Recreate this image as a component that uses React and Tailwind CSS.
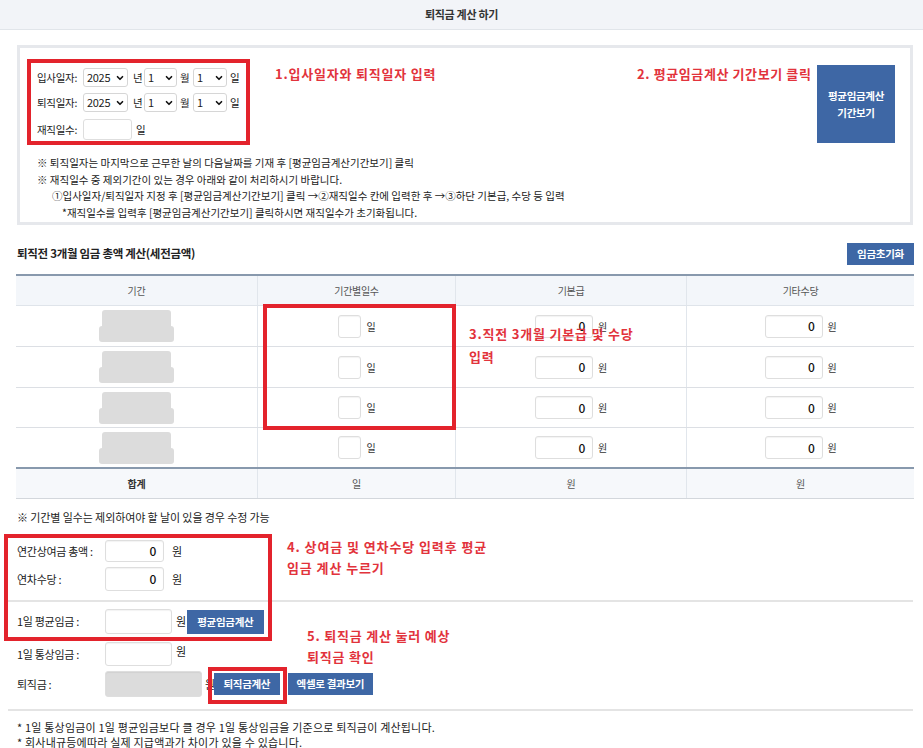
import React from 'react'
import { ChevronDown } from 'lucide-react'

// small pieces
const Select = ({ value, w }) => (
  <div className={`${w} h-[19px] border border-[#d6d6d6] rounded-[3px] bg-white flex items-center justify-between pl-[3px] pr-[2px] text-[11px] text-[#222]`}>
    <span>{value}</span>
    <ChevronDown size={10} strokeWidth={4} className="text-[#111]" />
  </div>
)

const Field = ({ w, h = 'h-[23px]', value, gray }) => (
  <div className={`${w} ${h} border border-[#dedede] rounded-[3px] shadow-[inset_0_1px_1px_rgba(0,0,0,0.05)] flex items-center justify-end pr-[7px] text-[12px] font-medium text-[#111] ${gray ? 'bg-[#dcdcdc] border-[#dcdcdc]' : 'bg-white'}`}>
    {value}
  </div>
)

const BlueBtn = ({ children, className = '' }) => (
  <div className={`bg-[#3e67a5] text-white font-bold text-[10.5px] tracking-[-0.3px] flex items-center justify-center ${className}`}>
    {children}
  </div>
)

const Blur = () => (
  <div className="flex flex-col items-center">
    <div className="w-[69px] h-[16px] bg-[#dcdcdc] rounded-t-[3px]" />
    <div className="w-[75px] h-[16px] bg-[#dcdcdc] rounded-[3px]" />
  </div>
)

const rows = [41, 41, 40, 40]

const App = () => {
  return (
    <div className="relative w-[923px] h-[748px] overflow-hidden bg-white text-[#333] font-['Noto_Sans_CJK_KR','Noto_Sans',sans-serif]">
      {/* header */}
      <div className="h-[30px] bg-[#f2f4f8] border-b border-[#e1e5ea] flex items-center justify-center text-[11px] font-bold tracking-[-0.3px] text-[#333]">
        퇴직금 계산 하기
      </div>

      {/* date box */}
      <div className="ml-[17px] mt-[15px] w-[896px] h-[180px] border-[3px] border-[#e6e8ec] flex flex-col">
        <div className="flex justify-between items-start">
          <div className="ml-[7px] mt-[11px] w-[223px] h-[86px] border-[4px] border-[#e3232c] pl-[6px] pt-[5px] flex flex-col text-[10.5px] tracking-[-0.3px] text-[#222]">
            <div className="flex items-center h-[19px]">
              <span className="w-[46px]">입사일자:</span>
              <Select value="2025" w="w-[45px]" />
              <span className="ml-[5px] w-[11px]">년</span>
              <Select value="1" w="w-[33px]" />
              <span className="ml-[3px] w-[13px]">월</span>
              <Select value="1" w="w-[34px]" />
              <span className="ml-[3px]">일</span>
            </div>
            <div className="flex items-center h-[19px] mt-[6px]">
              <span className="w-[46px]">퇴직일자:</span>
              <Select value="2025" w="w-[45px]" />
              <span className="ml-[5px] w-[11px]">년</span>
              <Select value="1" w="w-[33px]" />
              <span className="ml-[3px] w-[13px]">월</span>
              <Select value="1" w="w-[34px]" />
              <span className="ml-[3px]">일</span>
            </div>
            <div className="flex items-center h-[21px] mt-[7px]">
              <span className="w-[46px]">재직일수:</span>
              <div className="w-[49px] h-[21px] border border-[#dedede] rounded-[3px] bg-white" />
              <span className="ml-[4px]">일</span>
            </div>
          </div>
          <BlueBtn className="mt-[17px] mr-[15px] w-[78px] h-[78px] flex-col leading-[17px]">
            <span>평균임금계산</span>
            <span>기간보기</span>
          </BlueBtn>
        </div>
        <div className="mt-[10px] text-[10.5px] tracking-[0px] leading-[16.5px] text-[#222]">
          <p className="pl-[17px]">※ 퇴직일자는 마지막으로 근무한 날의 다음날짜를 기재 후 [평균임금계산기간보기] 클릭</p>
          <p className="pl-[17px]">※ 재직일수 중 제외기간이 있는 경우 아래와 같이 처리하시기 바랍니다.</p>
          <p className="pl-[32px]">①입사일자/퇴직일자 지정 후 [평균임금계산기간보기] 클릭 →②재직일수 칸에 입력한 후 →③하단 기본급, 수당 등 입력</p>
          <p className="pl-[42px]">*재직일수를 입력후 [평균임금계산기간보기] 클릭하시면 재직일수가 초기화됩니다.</p>
        </div>
      </div>

      {/* section title */}
      <div className="ml-[17px] mt-[18px] w-[897px] h-[22px] flex items-center justify-between">
        <span className="text-[11.5px] font-bold tracking-[-0.3px] text-[#222]">퇴직전 3개월 임금 총액 계산(세전금액)</span>
        <BlueBtn className="w-[67px] h-[22px]">임금초기화</BlueBtn>
      </div>

      {/* table */}
      <div className="ml-[16px] mt-[9px] w-[898px] text-[10px] tracking-[-0.3px] text-[#555]">
        <div className="grid grid-cols-[242px_198px_231px_227px] h-[32px] bg-[#f3f6fa] border-t-2 border-b border-t-[#8899ad] border-b-[#dfe4ea]">
          <div className="flex items-center justify-center border-r border-[#e1e6ec]">기간</div>
          <div className="flex items-center justify-center border-r border-[#e1e6ec]">기간별일수</div>
          <div className="flex items-center justify-center border-r border-[#e1e6ec]">기본급</div>
          <div className="flex items-center justify-center">기타수당</div>
        </div>
        {rows.map((h, i) => (
          <div
            key={i}
            className={`grid grid-cols-[242px_198px_231px_227px] border-b border-[#dcdfe4] ${h === 41 ? 'h-[41px]' : 'h-[40px]'}`}
          >
            <div className="flex items-center justify-center border-r border-[#e1e6ec]"><Blur /></div>
            <div className="flex items-center justify-center gap-[6px] border-r border-[#e1e6ec]">
              <Field w="w-[23px]" />
              <span className="text-[#333]">일</span>
            </div>
            <div className="flex items-center justify-center gap-[5px] border-r border-[#e1e6ec]">
              <Field w="w-[58px]" value="0" />
              <span className="text-[#333]">원</span>
            </div>
            <div className="flex items-center justify-center gap-[5px]">
              <Field w="w-[58px]" value="0" />
              <span className="text-[#333]">원</span>
            </div>
          </div>
        ))}
        <div className="grid grid-cols-[242px_198px_231px_227px] h-[32px] bg-[#f6f8fb] border-t-2 border-b border-t-[#8899ad] border-b-[#d3d7dc] -mt-px">
          <div className="flex items-center justify-center border-r border-[#e1e6ec] font-bold text-[#333]">합계</div>
          <div className="flex items-center justify-center border-r border-[#e1e6ec]">일</div>
          <div className="flex items-center justify-center border-r border-[#e1e6ec]">원</div>
          <div className="flex items-center justify-center">원</div>
        </div>
      </div>

      <p className="ml-[17px] mt-[10px] text-[11px] tracking-[-0.1px] leading-[16px] text-[#222]">
        ※ 기간별 일수는 제외하여야 할 날이 있을 경우 수정 가능
      </p>

      {/* wage form */}
      <div className="text-[11px] tracking-[-0.3px] text-[#222]">
        <div className="flex items-center h-[22px] mt-[15px] ml-[17px]">
          <span className="w-[88px]">연간상여금 총액 :</span>
          <Field w="w-[59px]" h="h-[22px]" value="0" />
          <span className="ml-[8px]">원</span>
        </div>
        <div className="flex items-center h-[24px] mt-[5px] ml-[17px]">
          <span className="w-[88px]">연차수당 :</span>
          <Field w="w-[59px]" h="h-[24px]" value="0" />
          <span className="ml-[8px]">원</span>
        </div>
        <div className="ml-[8px] mt-[9px] w-[905px] h-[2px] bg-[#e4e4e4]" />
        <div className="flex items-center h-[25px] mt-[7px] ml-[17px]">
          <span className="w-[88px]">1일 평균임금 :</span>
          <Field w="w-[67px]" h="h-[25px]" />
          <span className="ml-[4px]">원</span>
          <BlueBtn className="ml-[1px] w-[77px] h-[24px]">평균임금계산</BlueBtn>
        </div>
        <div className="flex items-center h-[24px] mt-[8px] ml-[17px]">
          <span className="w-[88px]">1일 통상임금 :</span>
          <Field w="w-[67px]" h="h-[24px]" />
          <span className="ml-[4px] -mt-[6px]">원</span>
        </div>
        <div className="flex items-center h-[26px] mt-[5px] ml-[17px]">
          <span className="w-[88px]">퇴직금 :</span>
          <Field w="w-[97px]" h="h-[26px]" gray />
          <span className="ml-[3px]">원</span>
          <BlueBtn className="ml-[-1px] w-[66px] h-[22px]">퇴직금계산</BlueBtn>
          <BlueBtn className="ml-[8px] w-[85px] h-[22px]">엑셀로 결과보기</BlueBtn>
        </div>
        <div className="ml-[8px] mt-[12px] w-[905px] h-[2px] bg-[#e4e4e4]" />
        <div className="ml-[17px] mt-[9px] text-[11px] tracking-[0.2px] leading-[15px]">
          <p>* 1일 통상임금이 1일 평균임금보다 클 경우 1일 통상임금을 기준으로 퇴직금이 계산됩니다.</p>
          <p>* 회사내규등에따라 실제 지급액과가 차이가 있을 수 있습니다.</p>
        </div>
      </div>

      {/* annotation overlay */}
      <div className="absolute left-[263px] top-[304px] w-[193px] h-[126px] border-[4px] border-[#e3232c]" />
      <div className="absolute left-[4px] top-[534px] w-[268px] h-[107px] border-[4px] border-[#e3232c]" />
      <div className="absolute left-[208px] top-[667px] w-[79px] h-[37px] border-[4px] border-[#e3232c]" />

      <div className="absolute left-[275px] top-[66px] text-[13px] tracking-[0.8px] leading-[16px] font-semibold text-[#e2333c]">1.입사일자와 퇴직일자 입력</div>
      <div className="absolute left-[637px] top-[66px] text-[13px] tracking-[0.6px] leading-[16px] font-semibold text-[#e2333c]">2. 평균임금계산 기간보기 클릭</div>
      <div className="absolute left-[469px] top-[322px] text-[13px] tracking-[0.8px] leading-[23px] font-semibold text-[#e2333c]">
        3.직전 3개월 기본급 및 수당<br />입력
      </div>
      <div className="absolute left-[287px] top-[536px] text-[13px] tracking-[0.9px] leading-[21px] font-semibold text-[#e2333c]">
        4. 상여금 및 연차수당 입력후 평균<br />임금 계산 누르기
      </div>
      <div className="absolute left-[307px] top-[625px] text-[13px] tracking-[0.8px] leading-[21px] font-semibold text-[#e2333c]">
        5. 퇴직금 계산 눌러 예상<br />퇴직금 확인
      </div>
    </div>
  )
}

export default App
